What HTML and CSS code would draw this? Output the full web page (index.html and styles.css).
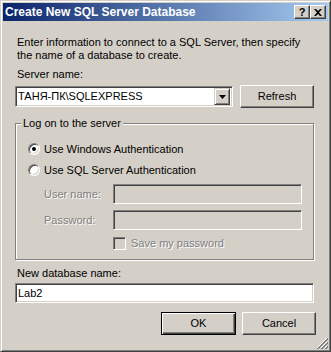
FILE: index.html
```html
<!DOCTYPE html>
<html>
<head>
<meta charset="utf-8">
<link rel="stylesheet" href="styles.css">
</head>
<body>
<div class="window">
  <div class="titlebar">
    <span class="title">Create New SQL Server Database</span>
    <div class="caption-btns">
      <span class="cbtn help">?</span>
      <span class="cbtn close"><svg width="8" height="7" viewBox="0 0 8 7"><path d="M0 0h2l2 2 2-2h2L5 3.5 8 7H6L4 5 2 7H0l3-3.5z" fill="#000"/></svg></span>
    </div>
  </div>
  <div class="content">
    <p class="intro">Enter information to connect to a SQL Server, then specify the name of a database to create.</p>
    <div class="label server-label">Server name:</div>
    <div class="server-row">
      <div class="combo">
        <span class="combo-text">ТАНЯ-ПК\SQLEXPRESS</span>
        <span class="combo-arrow"><svg width="7" height="4" viewBox="0 0 7 4"><path d="M0 0h7L3.5 4z" fill="#000"/></svg></span>
      </div>
      <span class="btn refresh">Refresh</span>
    </div>
    <fieldset class="group">
      <legend>Log on to the server</legend>
      <div class="radio-row first"><span class="radio checked"></span><span>Use Windows Authentication</span></div>
      <div class="radio-row"><span class="radio"></span><span>Use SQL Server Authentication</span></div>
      <div class="field-row user"><span class="flabel disabled">User name:</span><span class="tbox off"></span></div>
      <div class="field-row pass"><span class="flabel disabled">Password:</span><span class="tbox off"></span></div>
      <div class="check-row"><span class="check"></span><span class="disabled">Save my password</span></div>
    </fieldset>
    <div class="label db-label">New database name:</div>
    <div class="tbox db"><span>Lab2</span></div>
    <div class="btn-row">
      <span class="btn default">OK</span>
      <span class="btn cancel">Cancel</span>
    </div>
  </div>
  <svg class="grip" width="12" height="12" viewBox="0 0 12 12">
    <path d="M11 1L1 11M11 5L5 11M11 9L9 11" stroke="#fff" stroke-width="1"/>
    <path d="M12 1L1 12M12 2L2 12M12 5L5 12M12 6L6 12M12 9L9 12M12 10L10 12" stroke="#808080" stroke-width="1"/>
  </svg>
</div>
</body>
</html>
```

FILE: styles.css
```css
* { box-sizing: border-box; }
html, body { margin: 0; padding: 0; background: #D4D0C8; }
body {
  font-family: "Liberation Sans", Arial, sans-serif;
  font-size: 11px;
  line-height: 13px;
  color: #000;
}
.window {
  position: relative;
  width: 331px;
  height: 352px;
  background: #D4D0C8;
  border: 1px solid;
  border-color: #D4D0C8 #404040 #404040 #D4D0C8;
  box-shadow: inset 1px 1px 0 #fff, inset -1px -1px 0 #808080;
  padding: 2px;
}
.titlebar {
  height: 18px;
  background: linear-gradient(to right, #0A246A, #A6CAF0);
  display: flex;
  align-items: center;
  justify-content: space-between;
  padding: 0 2px 0 2px;
}
.title {
  color: #fff;
  font-weight: bold;
  font-size: 12px;
}
.caption-btns { display: flex; gap: 0; }
.cbtn {
  width: 16px;
  height: 14px;
  background: #D4D0C8;
  border: 1px solid;
  border-color: #fff #404040 #404040 #fff;
  box-shadow: inset -1px -1px 0 #808080;
  display: flex;
  align-items: center;
  justify-content: center;
  font-weight: bold;
  font-size: 11px;
  line-height: 12px;
}
.content { padding: 0 12px; }
.intro { margin: 15px 0 0 2px; width: 299px; }
.label { padding-left: 2px; }
.server-label { margin-top: 6px; }
.server-row {
  display: flex;
  gap: 7px;
  margin-top: 4px;
  align-items: center;
}
.combo {
  width: 218px;
  height: 21px;
  display: flex;
  align-items: center;
  justify-content: space-between;
  background: #fff;
  border: 1px solid;
  border-color: #808080 #fff #fff #808080;
  box-shadow: inset 1px 1px 0 #404040, inset -1px -1px 0 #D4D0C8;
  padding: 2px;
}
.combo-arrow {
  width: 16px;
  height: 17px;
  background: #D4D0C8;
  border: 1px solid;
  border-color: #D4D0C8 #404040 #404040 #D4D0C8;
  box-shadow: inset 1px 1px 0 #fff, inset -1px -1px 0 #808080;
  display: flex;
  align-items: center;
  justify-content: center;
}
.btn {
  display: flex;
  align-items: center;
  justify-content: center;
  height: 23px;
  background: #D4D0C8;
  border: 1px solid;
  border-color: #fff #404040 #404040 #fff;
  box-shadow: inset -1px -1px 0 #808080;
}
.refresh { width: 74px; }
.group {
  margin: 9px 0 0 0;
  padding: 0 0 8px 12px;
  border: 1px solid #808080;
  box-shadow: 1px 1px 0 #fff, inset 1px 1px 0 #fff;
  width: 299px;
  height: 143px;
  min-width: 0;
}
.group legend {
  padding: 0 2px;
  margin-left: -7px;
  background: #D4D0C8;
  line-height: 13px;
}
.radio-row {
  display: flex;
  align-items: center;
  height: 16px;
  gap: 4px;
  margin-top: 5px;
}
.radio-row.first { margin-top: 11px; }
.radio {
  position: relative;
  width: 12px;
  height: 12px;
  border-radius: 50%;
  background: #fff;
  border: 1px solid;
  border-color: #808080 #fff #fff #808080;
  box-shadow: inset 1px 1px 0 #404040, inset -1px -1px 0 #D4D0C8;
}
.radio.checked::after {
  content: "";
  position: absolute;
  left: 3px;
  top: 3px;
  width: 4px;
  height: 4px;
  border-radius: 50%;
  background: #000;
}
.field-row {
  display: flex;
  align-items: center;
  margin-top: 6px;
  padding-left: 16px;
}
.flabel { width: 69px; }
.disabled { color: #808080; text-shadow: 1px 1px 0 #fff; }
.tbox {
  height: 20px;
  border: 1px solid;
  border-color: #808080 #fff #fff #808080;
  box-shadow: inset 1px 1px 0 #404040, inset -1px -1px 0 #D4D0C8;
  background: #fff;
}
.tbox.off { width: 189px; background: #D4D0C8; }
.check-row {
  display: flex;
  align-items: center;
  gap: 5px;
  margin-top: 7px;
  padding-left: 85px;
  height: 13px;
}
.check {
  width: 13px;
  height: 13px;
  background: #D4D0C8;
  border: 1px solid;
  border-color: #808080 #fff #fff #808080;
  box-shadow: inset 1px 1px 0 #404040, inset -1px -1px 0 #D4D0C8;
}
.db-label { margin-top: 7px; }
.tbox.db {
  margin-top: 3px;
  width: 299px;
  display: flex;
  align-items: center;
  padding-left: 2px;
}
.btn-row {
  display: flex;
  justify-content: flex-end;
  gap: 6px;
  margin-top: 9px;
}
.btn.default {
  width: 75px;
  border: 1px solid #000;
  box-shadow: inset 1px 1px 0 #fff, inset -1px -1px 0 #404040, inset -2px -2px 0 #808080;
}
.btn.cancel { width: 74px; }
.grip { position: absolute; right: 2px; bottom: 2px; }
```
